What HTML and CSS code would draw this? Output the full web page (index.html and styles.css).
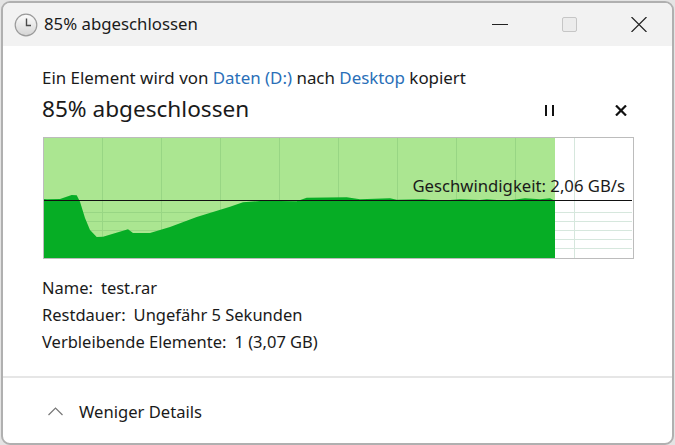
FILE: index.html
```html
<!DOCTYPE html>
<html lang="de">
<head>
    <meta charset="UTF-8">
    <title>85% abgeschlossen</title>
    <link rel="stylesheet" href="styles.css">
</head>
<body>
    <div class="window">
        <div class="titlebar">
            <svg class="clock" width="24" height="24" viewBox="0 0 24 24">
                <defs>
                    <linearGradient id="clockFace" x1="0" y1="0" x2="0" y2="1">
                        <stop offset="0" stop-color="#fdfdfd"/>
                        <stop offset="1" stop-color="#d4d4d4"/>
                    </linearGradient>
                </defs>
                <circle cx="12" cy="12" r="10.8" fill="url(#clockFace)" stroke="#9a9a9a" stroke-width="1.2"/>
                <path d="M12.5 5.5V12.5H17" fill="none" stroke="#4a4a4a" stroke-width="1.4"/>
            </svg>
            <span class="title-text">85% abgeschlossen</span>
            <div class="window-buttons">
                <svg width="16" height="15" viewBox="0 0 16 15"><path d="M0 7.5H16" stroke="#222" stroke-width="1"/></svg>
                <div class="maximize"></div>
                <svg width="16" height="15" viewBox="0 0 16 15"><path d="M.5 0L15.5 15M15.5 0L.5 15" stroke="#222" stroke-width="1.2"/></svg>
            </div>
        </div>

        <div class="content">
            <p class="copy-line">Ein Element wird von <span class="link">Daten (D:)</span> nach <span class="link">Desktop</span> kopiert</p>
            <div class="progress-head">
                <h1>85% abgeschlossen</h1>
                <div class="progress-buttons">
                    <svg width="10" height="11" viewBox="0 0 10 11"><path d="M0 0H2V11H0ZM7 0H9V11H7Z" fill="#111"/></svg>
                    <svg width="12" height="11" viewBox="0 0 12 11"><path d="M1 .5L11 10.5M11 .5L1 10.5" stroke="#111" stroke-width="2.2"/></svg>
                </div>
            </div>

            <div class="chart">
                <svg width="589" height="120" viewBox="44 138 589 120">
                    <rect x="44" y="138" width="511" height="120" fill="#abe691"/>
                    <g stroke="#d6e7dd" stroke-width="1">
                        <path d="M574.5 138V258"/>
                        <path d="M555 212.5H632M555 221.5H632M555 230.5H632M555 239.5H632M555 248.5H632"/>
                    </g>
                    <g stroke="#98d684" stroke-width="1">
                        <path d="M102.5 138V258M161.5 138V258M220.5 138V258M279.5 138V258M338.5 138V258M397.5 138V258M456.5 138V258M515.5 138V258"/>
                        <path d="M44 212.5H555M44 221.5H555M44 230.5H555"/>
                    </g>
                    <path fill="#06ad25" d="M44 199L47 199.3 60 199 71.7 195 76.7 195.3 80 201.7 85 218 90 230 96.7 237 103 236.7 128 229.3 133 233 150 233 170 227 196.7 217 230 206.7 243 202.3 263 200.7 296.7 201.3 306.7 197.7 346.7 197.3 360 199.3 390 198.3 396.7 199.7 423 199.3 440 200.7 460 199.3 480 200 486.7 199.3 506.7 200.7 525 198.3 540 199.3 550 198.3 555 200.7V258H44Z"/>
                    <path d="M44 200.5H632" stroke="#111" stroke-width="1"/>
                </svg>
                <span class="speed">Geschwindigkeit: 2,06 GB/s</span>
            </div>

            <ul class="details">
                <li><span>Name:</span><span>test.rar</span></li>
                <li><span>Restdauer:</span><span>Ungefähr 5 Sekunden</span></li>
                <li><span>Verbleibende Elemente:</span><span>1 (3,07 GB)</span></li>
            </ul>
        </div>

        <div class="footer">
            <svg width="15" height="9" viewBox="0 0 15 9"><path d="M.5 8L7.5 1L14.5 8" fill="none" stroke="#777" stroke-width="1.2"/></svg>
            <span>Weniger Details</span>
        </div>
    </div>
</body>
</html>
```

FILE: styles.css
```css
* {
    box-sizing: border-box;
}

body {
    margin: 0;
    height: 445px;
    overflow: hidden;
    background-color: #e4e4e4;
    font-family: "Noto Sans", sans-serif;
    color: #1a1a1a;
}

.window {
    margin: 1px 0 0 1px;
    width: 673px;
    height: 444px;
    background-color: #fff;
    border: 2px solid #b0b0b0;
    border-radius: 9px;
    overflow: hidden;
}

.titlebar {
    display: flex;
    align-items: center;
    height: 43px;
    padding-left: 11px;
    background-color: #f2f2f2;
}

.clock {
    margin-right: 6px;
}

.title-text {
    padding-bottom: 2px;
    font-size: 16.8px;
}

.window-buttons {
    display: flex;
    align-items: center;
    margin-left: auto;
    margin-right: 25px;
    gap: 54px;
}

.maximize {
    width: 15px;
    height: 15px;
    background-color: #ececec;
    border: 1px solid #c6c6c6;
    border-radius: 2px;
}

.content {
    padding: 22px 37px 0 39px;
}

.copy-line {
    margin: 0;
    font-size: 16.9px;
    line-height: 20px;
}

.link {
    color: #2a6fb8;
}

.progress-head {
    display: flex;
    align-items: center;
    justify-content: space-between;
    height: 34px;
    margin-top: 5px;
}

h1 {
    margin: 0;
    padding-bottom: 3px;
    font-size: 22.6px;
    font-weight: 400;
}

.progress-buttons {
    display: flex;
    align-items: center;
    gap: 60px;
    padding-right: 8px;
}

.chart {
    position: relative;
    width: 591px;
    height: 122px;
    margin: 10px 0 0 1px;
    border: 1px solid #bcbcbc;
    background-color: #fff;
}

.chart svg {
    display: block;
}

.speed {
    position: absolute;
    right: 8px;
    top: 38px;
    font-size: 16.7px;
    line-height: 20px;
}

.details {
    list-style: none;
    margin: 15px 0 0 0;
    padding: 0;
    font-size: 16.5px;
}

.details li {
    display: flex;
    gap: 8px;
    height: 27px;
    line-height: 27px;
}

.footer {
    display: flex;
    align-items: center;
    gap: 16px;
    height: 68px;
    margin-top: 21px;
    padding-left: 45px;
    border-top: 2px solid #e6e6e6;
    font-size: 16.6px;
}
```
